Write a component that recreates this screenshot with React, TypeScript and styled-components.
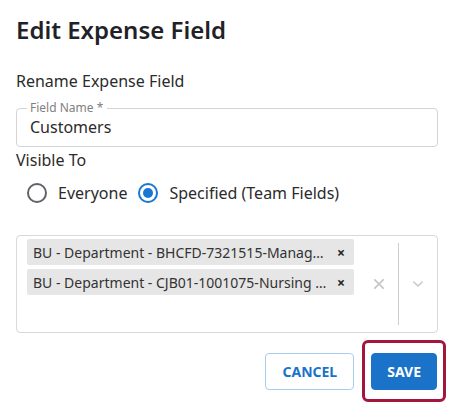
import React from "react";
import styled, { createGlobalStyle } from "styled-components";

const GlobalStyle = createGlobalStyle`
  html, body {
    margin: 0;
    padding: 0;
    background: #ffffff;
  }
  body {
    font-family: "Noto Sans", "Open Sans", sans-serif;
    color: #2b2b2b;
  }
`;

const Dialog = styled.div`
  width: 422px;
  padding: 14px 19px 0 16px;
  display: flex;
  flex-direction: column;
`;

const Title = styled.h2`
  margin: 0;
  font-size: 24px;
  line-height: 32px;
  font-weight: 600;
  color: #1f2328;
`;

const SectionLabel = styled.div<{ $top: number }>`
  margin-top: ${(p) => p.$top}px;
  font-size: 16px;
  line-height: 24px;
  color: #2b2b2b;
`;

const OutlinedField = styled.div`
  position: relative;
  margin-top: 15px;
  padding: 6px 13px 0;
  height: 39px;
  box-sizing: border-box;
  border: 1px solid #d4d4d4;
  border-radius: 4px;
`;

const FloatingLabel = styled.span`
  position: absolute;
  top: -8px;
  left: 10px;
  padding: 0 4px 0 3px;
  background: #ffffff;
  font-size: 12px;
  line-height: 14px;
  color: #808080;
`;

const FieldValue = styled.div`
  font-size: 16px;
  line-height: 24px;
  color: #2b2b2b;
`;

const RadioGroup = styled.div`
  display: flex;
  align-items: center;
  gap: 11px;
  margin: 4px 0 0 11px;
  height: 34px;
`;

const RadioOption = styled.label`
  display: flex;
  align-items: center;
  gap: 11px;
  font-size: 16px;
  line-height: 24px;
  color: #2b2b2b;
`;

const RadioCircle = styled.span<{ $checked?: boolean }>`
  width: 20px;
  height: 20px;
  box-sizing: border-box;
  border-radius: 50%;
  border: 2px solid ${(p) => (p.$checked ? "#1976d2" : "#5f6368")};
  display: flex;
  align-items: center;
  justify-content: center;

  &::after {
    content: "";
    width: 10px;
    height: 10px;
    border-radius: 50%;
    background: #1976d2;
    display: ${(p) => (p.$checked ? "block" : "none")};
  }
`;

const Select = styled.div`
  margin-top: 25px;
  height: 98px;
  box-sizing: border-box;
  border: 1px solid #d9d9d9;
  border-radius: 4px;
  display: flex;
`;

const ChipList = styled.div`
  flex: 1;
  padding: 3px 0 0 10px;
  display: flex;
  flex-direction: column;
  gap: 4px;
`;

const Chip = styled.div`
  width: 327px;
  height: 26px;
  box-sizing: border-box;
  background: #e6e6e6;
  border-radius: 2px;
  display: flex;
  align-items: center;
  padding: 0 9px 0 6px;
  font-size: 14px;
  color: #333;
`;

const ChipLabel = styled.span`
  flex: 1;
  white-space: nowrap;
  overflow: hidden;
  text-overflow: ellipsis;
`;

const ChipRemove = styled.span`
  margin-left: 7px;
  font-size: 14px;
  font-weight: 700;
  color: #222;
`;

const Indicators = styled.div`
  display: flex;
  align-items: center;
  padding: 7px 0;
`;

const IndicatorButton = styled.div`
  width: 38px;
  display: flex;
  align-items: center;
  justify-content: center;
  color: #c6c6c6;
`;

const Separator = styled.span`
  align-self: stretch;
  width: 1px;
  background: #cccccc;
`;

const Actions = styled.div`
  margin: 7px -8px 0 0;
  display: flex;
  justify-content: flex-end;
  align-items: center;
  gap: 8px;
`;

const Button = styled.button<{ $primary?: boolean }>`
  height: 37px;
  box-sizing: border-box;
  padding: 0 ${(p) => (p.$primary ? 15 : 16)}px;
  border-radius: 4px;
  font-family: "Noto Sans", sans-serif;
  font-size: 14px;
  font-weight: 700;
  letter-spacing: 0;
  text-transform: uppercase;
  cursor: pointer;
  border: 1px solid ${(p) => (p.$primary ? "#1a73c8" : "#a9cdef")};
  background: ${(p) => (p.$primary ? "#1a73c8" : "#ffffff")};
  color: ${(p) => (p.$primary ? "#ffffff" : "#1a73c8")};
`;

const Highlight = styled.div`
  border: 3px solid #a3173f;
  border-radius: 6px;
  padding: 10px 6px 9px;
`;

const CrossIcon = ({ size, stroke }: { size: number; stroke: number }) => (
  <svg width={size} height={size} viewBox="0 0 20 20">
    <path
      d="M4 4 L16 16 M16 4 L4 16"
      stroke="currentColor"
      strokeWidth={stroke}
      strokeLinecap="round"
    />
  </svg>
);

const ChevronIcon = () => (
  <svg width="14" height="14" viewBox="0 0 20 20">
    <path
      d="M4 7 L10 13 L16 7"
      stroke="currentColor"
      strokeWidth="2"
      fill="none"
      strokeLinecap="round"
      strokeLinejoin="round"
    />
  </svg>
);

const teams = [
  "BU - Department - BHCFD-7321515-Management Services",
  "BU - Department - CJB01-1001075-Nursing Administration",
];

export default function App() {
  return (
    <>
      <GlobalStyle />
      <Dialog>
        <Title>Edit Expense Field</Title>
        <SectionLabel $top={23}>Rename Expense Field</SectionLabel>
        <OutlinedField>
          <FloatingLabel>Field Name *</FloatingLabel>
          <FieldValue>Customers</FieldValue>
        </OutlinedField>
        <SectionLabel $top={1}>Visible To</SectionLabel>
        <RadioGroup>
          <RadioOption>
            <RadioCircle />
            Everyone
          </RadioOption>
          <RadioOption>
            <RadioCircle $checked />
            Specified (Team Fields)
          </RadioOption>
        </RadioGroup>
        <Select>
          <ChipList>
            {teams.map((t) => (
              <Chip key={t}>
                <ChipLabel>{t}</ChipLabel>
                <ChipRemove>×</ChipRemove>
              </Chip>
            ))}
          </ChipList>
          <Indicators>
            <IndicatorButton>
              <CrossIcon size={14} stroke={2.4} />
            </IndicatorButton>
            <Separator />
            <IndicatorButton>
              <ChevronIcon />
            </IndicatorButton>
          </Indicators>
        </Select>
        <Actions>
          <Button>Cancel</Button>
          <Highlight>
            <Button $primary>Save</Button>
          </Highlight>
        </Actions>
      </Dialog>
    </>
  );
}
